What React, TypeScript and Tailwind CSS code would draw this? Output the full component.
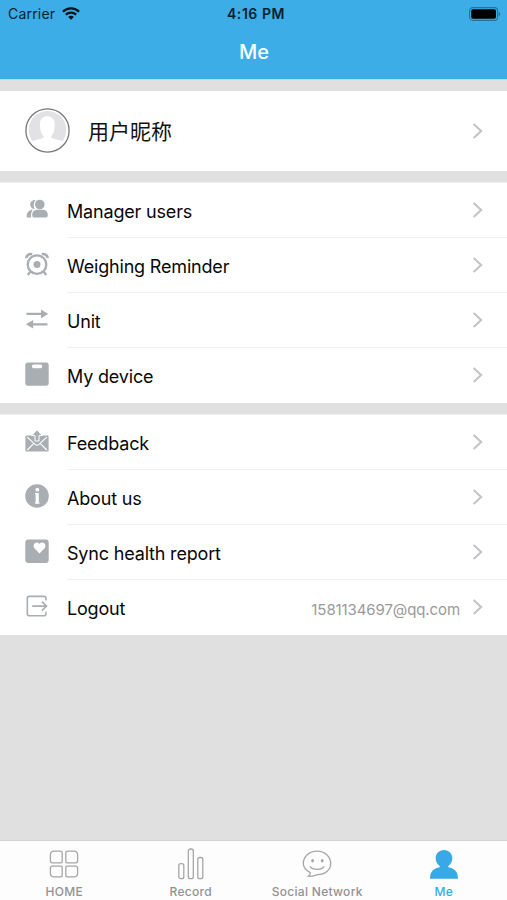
import type { ReactNode } from 'react';

const GRAY = '#a9aeb3';

function Chevron() {
  return (
    <svg width="12" height="18" viewBox="0 0 12 18" className="shrink-0" fill="none" stroke="#c3c3c7" strokeWidth="2">
      <path d="M1.6 2 L9.2 9 L1.6 16" />
    </svg>
  );
}

function RowIcon({ children }: { children: ReactNode }) {
  return (
    <svg width="24" height="26" viewBox="0 0 24 26" className="mt-[14px] shrink-0 self-start overflow-visible" fill={GRAY}>
      {children}
    </svg>
  );
}

const icons = {
  users: (
    <>
      <path d="M10.8 2.9 C7.6 2.7 5.2 4.7 5.2 7.4 C5.2 10 7.2 12 9.8 12 C8.9 10.6 8.7 9 8.8 7.4 C8.9 5.6 9.6 4 10.8 2.9z" />
      <path d="M1.7 20.4 C1.4 16.2 3 13 8 12.4 C6.4 14.2 5.8 17 6.1 20.4z" />
      <circle cx="14.8" cy="7.5" r="4.8" />
      <path d="M7.2 18 c0-3.4 2.2-5.2 5.4-5.2 h4.8 c3.2 0 5.4 1.8 5.4 5.2 0 2-.8 2.6-2.4 2.6 H9.6 c-1.6 0-2.4-.6-2.4-2.6z" />
    </>
  ),
  alarm: (
    <g fill="none" stroke={GRAY} strokeWidth="2.3">
      <circle cx="12" cy="12.6" r="9.3" />
      <circle cx="12" cy="12.6" r="3.5" fill={GRAY} stroke="none" />
      <path d="M1.3 6.2 C1.5 3.4 4 1.4 7.2 2.2 M22.7 6.2 C22.5 3.4 20 1.4 16.8 2.2" strokeWidth="2.6" />
      <path d="M5.2 19.8 L2.8 23 M18.8 19.8 L21.2 23" />
    </g>
  ),
  swap: (
    <>
      <path d="M1.5 5.8 H16 V2.6 L23.3 6.9 L16 11.2 V8 H1.5z" />
      <path d="M22.5 16.2 H8.2 V13 L.8 17.3 L8.2 21.6 V18.4 H22.5z" />
    </>
  ),
  scale: (
    <>
      <rect x=".3" y=".5" width="23.4" height="23.2" rx="2.6" />
      <rect x="7" y="2.4" width="10.2" height="3.8" rx="1.6" fill="#fff" />
    </>
  ),
  mail: (
    <>
      <rect x=".4" y="6.4" width="23.2" height="16.2" rx="1" />
      <g fill="none" stroke="#fff" strokeWidth="1.1">
        <path d="M2.2 8.2 L10 15.4 Q12 17 14 15.4 L21.8 8.2" />
        <path d="M2.2 21 L8.6 14.6 M21.8 21 L15.4 14.6" />
      </g>
      <path d="M12 .7 L17.2 6.6 H14 V12 H10 V6.6 H6.8z" stroke="#fff" strokeWidth="1" />
    </>
  ),
  info: (
    <>
      <circle cx="12" cy="12" r="11.8" />
      <circle cx="12.3" cy="5.7" r="1.9" fill="#fff" />
      <path d="M10 9 H13.8 V18.6 H14.5 V19.8 H10 V18.6 H10.6 V10.2 H10z" fill="#fff" />
    </>
  ),
  heart: (
    <>
      <rect x=".3" y=".5" width="23.4" height="23.4" rx="3" />
      <path d="M14.5 14.4 L9.6 9.5 C7.5 6.5 9.1 3.4 11.8 3.4 c1.3 0 2.2 .7 2.7 1.5 C15 4.1 15.9 3.4 17.2 3.4 c2.8 0 4.4 3.1 2.2 6.1z" fill="#fff" />
    </>
  ),
  logout: (
    <g fill="none" stroke={GRAY} strokeWidth="1.6">
      <path d="M21 6.5 V4.4 Q21 2.4 19 2.4 H4.3 Q2.3 2.4 2.3 4.4 V19.8 Q2.3 21.8 4.3 21.8 H19 Q21 21.8 21 19.8 V17.7" />
      <path d="M7.2 12.1 H21.2 M16.9 7.6 L21.5 12.1 L16.9 16.6" />
    </g>
  ),
};

type Item = { icon: keyof typeof icons; label: string; detail?: string };

const first: Item[] = [
  { icon: 'users', label: 'Manager users' },
  { icon: 'alarm', label: 'Weighing Reminder' },
  { icon: 'swap', label: 'Unit' },
  { icon: 'scale', label: 'My device' },
];
const second: Item[] = [
  { icon: 'mail', label: 'Feedback' },
  { icon: 'info', label: 'About us' },
  { icon: 'heart', label: 'Sync health report' },
  { icon: 'logout', label: 'Logout', detail: '1581134697@qq.com' },
];

function Group({ items }: { items: Item[] }) {
  return (
    <section className="bg-white">
      {items.map((item) => (
        <div key={item.label} className="group flex h-[55px] pl-[25px]">
          <RowIcon>{icons[item.icon]}</RowIcon>
          <div className="ml-[18px] flex flex-1 items-center border-b border-[#f0f0f1] pr-[23px] group-last:border-transparent">
            <span className="flex-1 pt-[4px] text-[18px] leading-6 tracking-[-0.18px] text-[#080808]">{item.label}</span>
            {item.detail && <span className="mr-[12px] pt-[5px] text-[15px] leading-5 tracking-[-0.1px] text-[#9a9a9a]">{item.detail}</span>}
            <Chevron />
          </div>
        </div>
      ))}
    </section>
  );
}

function Tab({ label, active, children }: { label: string; active?: boolean; children: ReactNode }) {
  return (
    <div className={`flex flex-1 flex-col items-center pt-[7px] ${active ? 'text-[#38a9e4]' : 'text-[#929292]'}`}>
      <svg width="32" height="32" viewBox="0 0 32 32" fill="none" stroke="#a6a6a6" strokeWidth="1.3">
        {children}
      </svg>
      <span className="mt-[4px] whitespace-nowrap text-[12px] font-medium leading-4 tracking-[0.3px]">{label}</span>
    </div>
  );
}

export default function App() {
  return (
    <div className="flex h-[900px] w-[507px] flex-col overflow-hidden bg-[#e0e0e0] font-['Inter','Noto_Sans_CJK_SC',sans-serif]">
      <header className="h-[79px] bg-[#3cade6]">
        <div className="grid h-[27px] grid-cols-3 items-center pl-[8px] pr-[6px] text-[14px] text-[#06222f]">
          <div className="flex items-center gap-[7px]">
            <span className="tracking-[0.2px]">Carrier</span>
            <svg width="18" height="13" viewBox="0 0 18 13" fill="none" stroke="#04141c" strokeWidth="2.3">
              <path d="M.9 4.7 C5.4 .3 12.6 .3 17.1 4.7" />
              <path d="M3.8 7.7 C6.7 5 11.3 5 14.2 7.7" />
              <path d="M9 12.8 L6.1 9.9 C7.7 8.5 10.3 8.5 11.9 9.9z" fill="#04141c" stroke="none" />
            </svg>
          </div>
          <span className="pl-[3px] text-center font-semibold tracking-[0.55px]">4:16 PM</span>
          <svg width="32" height="14" viewBox="0 0 32 14" className="justify-self-end">
            <rect x=".6" y=".6" width="28" height="12.8" rx="3.2" fill="none" stroke="#267197" strokeWidth="1.1" />
            <rect x="2.2" y="2.2" width="24.8" height="9.6" rx="1.8" fill="#000" />
            <path d="M29.7 4.8 Q31.3 5.6 31.3 7 Q31.3 8.4 29.7 9.2z" fill="#267197" />
          </svg>
        </div>
        <h1 className="mt-[11px] pl-px text-center text-[20px] font-medium leading-7 text-white">Me</h1>
      </header>
      <div className="h-[12px] border-t border-[#b5d9ea]" />
      <section className="flex h-[80px] items-center bg-white pl-[25px] pr-[23px]">
        <svg width="45" height="45" viewBox="0 0 45 45" className="mb-[2px] shrink-0">
          <circle cx="22.5" cy="22.5" r="21.6" fill="#fff" stroke="#777" strokeWidth="1.3" />
          <circle cx="22.5" cy="21.8" r="18.8" fill="#e2e2e4" />
          <path d="M7.5 33.5 C9.5 31.2 18.8 31.5 18.8 28.5 C15.5 25.5 15 20.5 15 16 C15 5.8 29.7 5.8 29.7 16 C29.7 20.5 29.2 25.5 26 28.5 C26 31.5 35.5 31.2 37.5 33.5 C31 43.5 14 43.5 7.5 33.5z" fill="#fff" />
        </svg>
        <span className="ml-[18px] flex-1 pt-px text-[21px] leading-7 text-[#111]">用户昵称</span>
        <Chevron />
      </section>
      <div className="h-[12px] border-b border-[#eeeeee]" />
      <Group items={first} />
      <div className="h-[12px] border-b border-[#eeeeee]" />
      <Group items={second} />
      <div className="flex-1" />
      <nav className="flex h-[60px] border-t border-[#d2d2d2] bg-[#fdfdfd] pl-px">
        <Tab label="HOME">
          <path d="M6 3.1 h6.2 q2 0 2 2 v8.7 q0 1-1 1 H4.4 q-2 0-2-2 V7.1 q0-4 3.6-4z" />
          <path d="M26 3.1 h-6.2 q-2 0-2 2 v8.7 q0 1 1 1 h8.8 q2 0 2-2 V7.1 q0-4-3.6-4z" />
          <path d="M6 28.9 h6.2 q2 0 2-2 v-7.7 q0-1-1-1 H4.4 q-2 0-2 2 v4.7 q0 4 3.6 4z" />
          <path d="M26 28.9 h-6.2 q-2 0-2-2 v-7.7 q0-1 1-1 h8.8 q2 0 2 2 v4.7 q0 4-3.6 4z" />
        </Tab>
        <Tab label="Record">
          <rect x="3.8" y="15.7" width="5" height="15" rx="2" />
          <rect x="13.3" y="1" width="5" height="29.7" rx="2.2" />
          <rect x="22.8" y="9.5" width="5" height="21.2" rx="2" />
        </Tab>
        <Tab label="Social Network">
          <path d="M9.3 24.6 C4.8 22.5 2.3 19.2 2.3 15.3 C2.3 8.5 8.3 3.2 16 3.2 C23.7 3.2 29.7 8.5 29.7 15.3 C29.7 22.1 24 26.7 16.5 26.7 C13.5 28 9.8 28.5 7.3 28.2 Q9.4 27 9.3 24.6z" />
          <path d="M9 18.3 C11.5 22.3 20.5 22.3 23 18.3" />
          <ellipse cx="11.6" cy="12.7" rx="1.4" ry="1.8" fill="#a6a6a6" stroke="none" />
          <ellipse cx="21.2" cy="12.7" rx="1.4" ry="1.8" fill="#a6a6a6" stroke="none" />
        </Tab>
        <Tab label="Me" active>
          <path d="M16 2 C21 2 24.3 5.6 24.3 10.3 C24.3 13.4 22.8 16.3 20.3 18 V19.3 C26.5 20.5 30 23.5 30 30.8 H2 C2 23.5 5.5 20.5 11.7 19.3 V18 C9.2 16.3 7.7 13.4 7.7 10.3 C7.7 5.6 11 2 16 2z" fill="#38a9e4" stroke="none" />
        </Tab>
      </nav>
    </div>
  );
}
